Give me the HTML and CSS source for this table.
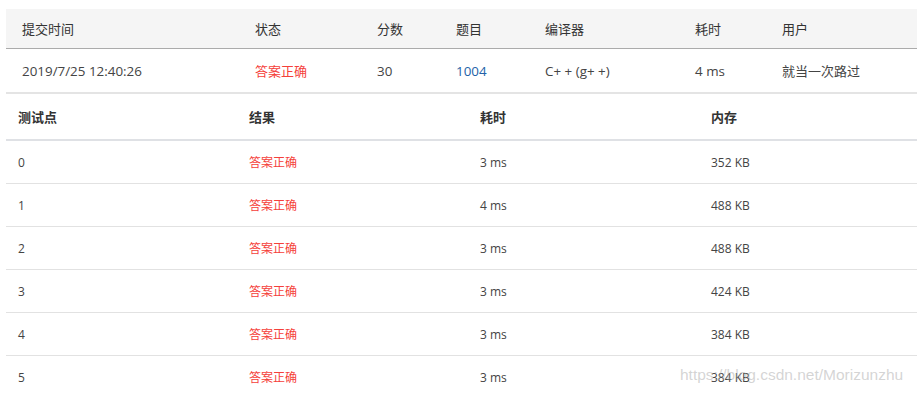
FILE: index.html
```html
<!DOCTYPE html>
<html lang="zh-CN">
<head>
    <meta charset="UTF-8">
    <meta name="viewport" content="width=device-width, initial-scale=1.0">
    <title>提交详情</title>
    <link rel="stylesheet" href="styles.css">
</head>
<body>
    <div id="container">
        <table class="submit_table">
            <colgroup>
                <col style="width:233px">
                <col style="width:122px">
                <col style="width:79px">
                <col style="width:89px">
                <col style="width:150px">
                <col style="width:87px">
                <col>
            </colgroup>
            <thead>
                <tr>
                    <th>提交时间</th>
                    <th>状态</th>
                    <th>分数</th>
                    <th>题目</th>
                    <th>编译器</th>
                    <th>耗时</th>
                    <th>用户</th>
                </tr>
            </thead>
            <tbody>
                <tr>
                    <td class="num">2019/7/25 12:40:26</td>
                    <td class="accepted">答案正确</td>
                    <td class="num">30</td>
                    <td class="num"><a class="problem_link" href="#">1004</a></td>
                    <td class="num">C+ + (g+ +)</td>
                    <td class="num">4 ms</td>
                    <td>就当一次路过</td>
                </tr>
            </tbody>
        </table>

        <table class="case_table">
            <colgroup>
                <col style="width:231px">
                <col style="width:231px">
                <col style="width:231px">
                <col>
            </colgroup>
            <thead>
                <tr>
                    <th>测试点</th>
                    <th>结果</th>
                    <th>耗时</th>
                    <th>内存</th>
                </tr>
            </thead>
            <tbody>
                <tr><td>0</td><td class="accepted">答案正确</td><td>3 ms</td><td>352 KB</td></tr>
                <tr><td>1</td><td class="accepted">答案正确</td><td>4 ms</td><td>488 KB</td></tr>
                <tr><td>2</td><td class="accepted">答案正确</td><td>3 ms</td><td>488 KB</td></tr>
                <tr><td>3</td><td class="accepted">答案正确</td><td>3 ms</td><td>424 KB</td></tr>
                <tr><td>4</td><td class="accepted">答案正确</td><td>3 ms</td><td>384 KB</td></tr>
                <tr><td>5</td><td class="accepted">答案正确</td><td>3 ms</td><td>384 KB</td></tr>
            </tbody>
        </table>

        <div class="watermark">https://blog.csdn.net/Morizunzhu</div>
    </div>
</body>
</html>
```

FILE: styles.css
```css
body{
    margin: 0;
    background: #fff;
    font-family: "Open Sans", "Noto Sans CJK SC", sans-serif;
    color: #333;
}

#container{
    position: relative;
    padding: 9px 0 0 6px;
    height: 384px;
    overflow: hidden;
}

table{
    width: 911px;
    border-collapse: collapse;
    table-layout: fixed;
}

th, td{
    text-align: left;
    white-space: nowrap;
    padding: 0;
}

.submit_table th{
    height: 39px;
    background: #f5f5f5;
    border-bottom: 1px solid #ababab;
    font-size: 13px;
    font-weight: normal;
    color: #333;
    padding-left: 16px;
}

.submit_table td{
    height: 43px;
    border-bottom: 2px solid #e4e4e4;
    font-size: 13px;
    color: #444;
    padding-left: 16px;
}

.submit_table td.num{
    font-size: 13.4px;
}

.case_table th{
    height: 45px;
    border-bottom: 2px solid #dfe1e5;
    font-size: 13px;
    font-weight: 600;
    color: #333;
    padding-left: 12px;
}

.case_table td{
    height: 42px;
    border-bottom: 1px solid #e2e2e2;
    font-size: 12px;
    color: #444;
    padding-left: 12px;
}

.accepted{
    color: #f5403a !important;
}

.problem_link{
    color: #2462a8;
    text-decoration: none;
}

.watermark{
    position: absolute;
    left: 680px;
    top: 366px;
    font-family: "Liberation Sans", sans-serif;
    font-size: 15.5px;
    color: rgba(170, 170, 170, 0.5);
    pointer-events: none;
}
```
